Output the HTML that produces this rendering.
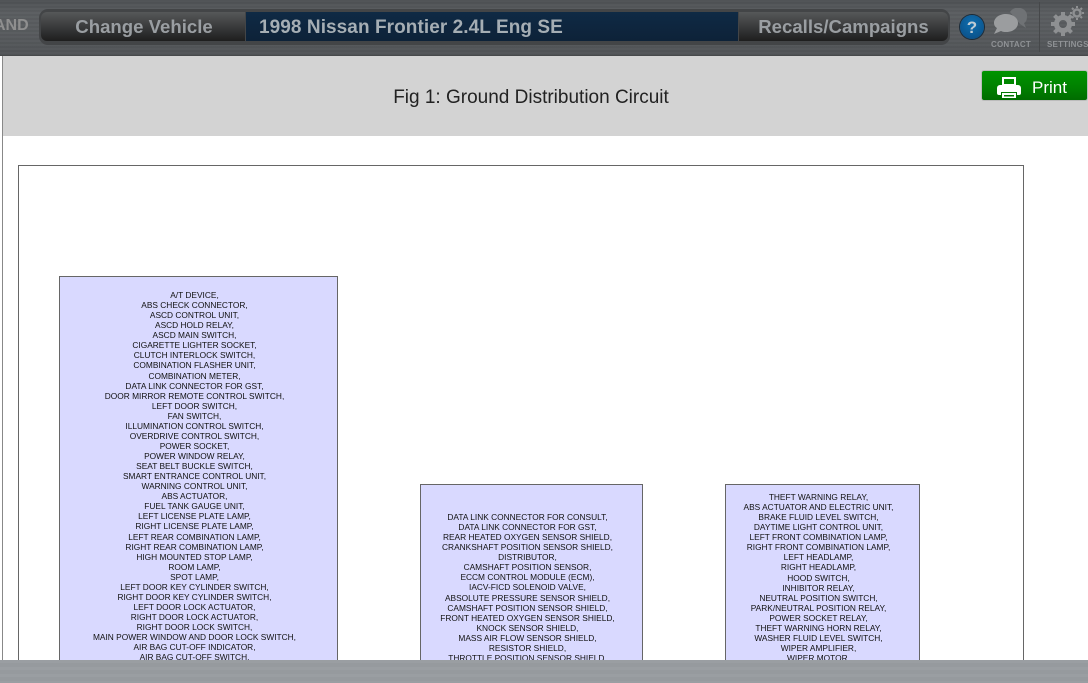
<!DOCTYPE html>
<html><head><meta charset="utf-8"><style>
html,body{margin:0;padding:0;width:1088px;height:683px;overflow:hidden;background:#fff;font-family:"Liberation Sans",sans-serif}
.a{position:absolute}
#top{left:0;top:0;width:1088px;height:55px;background:repeating-linear-gradient(rgba(255,255,255,.018) 0 2px,rgba(0,0,0,.018) 2px 4px),linear-gradient(#4d5053,#5a5d60 22%,#585b5e 60%,#505356);border-bottom:1px solid #47494b}
#pill{left:39px;top:9px;width:911px;height:36px;border-radius:9px;background:#434547}
.seg{top:12px;height:29px;font-weight:bold;font-size:18.6px;line-height:30px;text-align:center;color:#9a9ea2}
.dk{background:linear-gradient(#565859,#3a3b3c 50%,#1e1e1e)}
.box{background:#d9d9ff;border:1px solid #666;box-sizing:border-box;overflow:hidden;text-align:center;font-size:8.35px;line-height:10.06px;color:#111;padding-right:8px}
</style></head><body>
<div class="a" style="left:2px;top:55px;width:1px;height:610px;background:#888"></div>
<div class="a" style="left:3px;top:56px;width:1085px;height:80px;background:#d3d3d3"></div>
<div class="a" style="left:0;top:56px;width:2px;height:80px;background:#fff"></div>
<div class="a" style="left:3px;top:87px;width:1056px;text-align:center;font-size:19px;line-height:22px;color:#222">Fig 1: Ground Distribution Circuit</div>

<div class="a" style="left:982px;top:71px;width:105px;height:29px;background:linear-gradient(#009400,#007f00 60%,#006c00);border-radius:2px;box-shadow:0 0 0 1px #bbb"></div>
<svg class="a" style="left:997px;top:77px" width="24" height="22" viewBox="0 0 24 22"><path fill="#fff" fill-rule="evenodd" d="M5 0h14v8H5zM7 2v5h10V2zM3 8h18a3 3 0 0 1 3 3v5a2 2 0 0 1-2 2h-2v-3H4v3H2a2 2 0 0 1-2-2v-5a3 3 0 0 1 3-3zM5 16h14v5H5zM7 18v1.500h10V18z"/></svg>
<div class="a" style="left:1032px;top:78px;font-size:17px;line-height:20px;color:#fff">Print</div>

<div class="a" style="left:18px;top:165px;width:1006px;height:510px;border:1px solid #666;box-sizing:border-box;background:#fff"></div>

<div class="a box" style="left:59px;top:276px;width:279px;height:390px;padding-top:13px">A/T DEVICE,<br>ABS CHECK CONNECTOR,<br>ASCD CONTROL UNIT,<br>ASCD HOLD RELAY,<br>ASCD MAIN SWITCH,<br>CIGARETTE LIGHTER SOCKET,<br>CLUTCH INTERLOCK SWITCH,<br>COMBINATION FLASHER UNIT,<br>COMBINATION METER,<br>DATA LINK CONNECTOR FOR GST,<br>DOOR MIRROR REMOTE CONTROL SWITCH,<br>LEFT DOOR SWITCH,<br>FAN SWITCH,<br>ILLUMINATION CONTROL SWITCH,<br>OVERDRIVE CONTROL SWITCH,<br>POWER SOCKET,<br>POWER WINDOW RELAY,<br>SEAT BELT BUCKLE SWITCH,<br>SMART ENTRANCE CONTROL UNIT,<br>WARNING CONTROL UNIT,<br>ABS ACTUATOR,<br>FUEL TANK GAUGE UNIT,<br>LEFT LICENSE PLATE LAMP,<br>RIGHT LICENSE PLATE LAMP,<br>LEFT REAR COMBINATION LAMP,<br>RIGHT REAR COMBINATION LAMP,<br>HIGH MOUNTED STOP LAMP,<br>ROOM LAMP,<br>SPOT LAMP,<br>LEFT DOOR KEY CYLINDER SWITCH,<br>RIGHT DOOR KEY CYLINDER SWITCH,<br>LEFT DOOR LOCK ACTUATOR,<br>RIGHT DOOR LOCK ACTUATOR,<br>RIGHT DOOR LOCK SWITCH,<br>MAIN POWER WINDOW AND DOOR LOCK SWITCH,<br>AIR BAG CUT-OFF INDICATOR,<br>AIR BAG CUT-OFF SWITCH,</div>

<div class="a box" style="left:420px;top:484px;width:223px;height:190px;padding-top:27px">DATA LINK CONNECTOR FOR CONSULT,<br>DATA LINK CONNECTOR FOR GST,<br>REAR HEATED OXYGEN SENSOR SHIELD,<br>CRANKSHAFT POSITION SENSOR SHIELD,<br>DISTRIBUTOR,<br>CAMSHAFT POSITION SENSOR,<br>ECCM CONTROL MODULE (ECM),<br>IACV-FICD SOLENOID VALVE,<br>ABSOLUTE PRESSURE SENSOR SHIELD,<br>CAMSHAFT POSITION SENSOR SHIELD,<br>FRONT HEATED OXYGEN SENSOR SHIELD,<br>KNOCK SENSOR SHIELD,<br>MASS AIR FLOW SENSOR SHIELD,<br>RESISTOR SHIELD,<br>THROTTLE POSITION SENSOR SHIELD,</div>

<div class="a box" style="left:725px;top:484px;width:195px;height:190px;padding-top:7px">THEFT WARNING RELAY,<br>ABS ACTUATOR AND ELECTRIC UNIT,<br>BRAKE FLUID LEVEL SWITCH,<br>DAYTIME LIGHT CONTROL UNIT,<br>LEFT FRONT COMBINATION LAMP,<br>RIGHT FRONT COMBINATION LAMP,<br>LEFT HEADLAMP,<br>RIGHT HEADLAMP,<br>HOOD SWITCH,<br>INHIBITOR RELAY,<br>NEUTRAL POSITION SWITCH,<br>PARK/NEUTRAL POSITION RELAY,<br>POWER SOCKET RELAY,<br>THEFT WARNING HORN RELAY,<br>WASHER FLUID LEVEL SWITCH,<br>WIPER AMPLIFIER,<br>WIPER MOTOR,</div>

<div class="a" style="left:0;top:660px;width:1088px;height:23px;background:repeating-linear-gradient(rgba(255,255,255,.02) 0 3px,rgba(0,0,0,.015) 3px 7px),#989ca0"></div>

<div class="a" id="top"></div>
<div class="a" style="left:-6px;top:16px;font-weight:bold;font-size:16px;line-height:19px;color:#8f8f8f">AND</div>
<div class="a" id="pill"></div>
<div class="a seg dk" style="left:41px;width:204px;border-radius:6px 0 0 6px;text-indent:2px">Change Vehicle</div>
<div class="a seg" style="left:246px;width:492px;background:linear-gradient(#0f2a45,#0d2238);text-align:left;text-indent:13px;color:#a5aeb4;font-size:19px;line-height:31px;letter-spacing:.07px">1998 Nissan Frontier 2.4L Eng SE</div>
<div class="a seg dk" style="left:739px;width:209px;border-radius:0 6px 6px 0">Recalls/Campaigns</div>

<div class="a" style="left:960px;top:15px;width:24px;height:24px;border-radius:50%;background:radial-gradient(circle at 50% 35%,#0f6fb0,#0a4a80);box-shadow:0 0 0 1px #1a2a38;color:#c0ccd4;font-weight:bold;font-size:17px;line-height:25px;text-align:center">?</div>

<svg class="a" style="left:992px;top:8px" width="38" height="28" viewBox="0 0 38 28"><path fill="#6f7275" d="M18 4a9 8 0 0 1 17 4c0 4-1 6-3 7l2 5-6-4z"/><path fill="#9b9d9f" d="M14 6c7 0 12 4 12 9s-5 9-12 9c-2 0-3 0-5-1l-7 3 3-6c-2-1-3-3-3-5 0-5 5-9 12-9z"/></svg>
<div class="a" style="left:991px;top:40px;font-size:8px;font-weight:bold;line-height:10px;color:#8f9295;letter-spacing:.2px">CONTACT</div>
<div class="a" style="left:1039px;top:2px;width:1px;height:50px;background:#46484a"></div>

<svg class="a" style="left:1049px;top:6px" width="36" height="30" viewBox="0 0 36 30"><g fill="none" stroke="#8e9092"><circle cx="14" cy="18" r="6.500" stroke-width="5"/><path stroke-width="4" d="M14 6v4M14 26v4M2 18h4M22 18h4M5.500 9.500l3 3M19.500 23.500l3 3M22.500 9.500l-3 3M8.500 23.500l-3 3"/><circle cx="28" cy="7" r="3.500" stroke-width="2.500"/><path stroke-width="2" d="M28 0v2M28 12v2M21 7h2M33 7h2M23 2l1.500 1.500M31.500 10.500l1.500 1.500M33 2l-1.500 1.500M24.500 10.500l-1.500 1.500"/></g></svg>
<div class="a" style="left:1047px;top:40px;font-size:8px;font-weight:bold;line-height:10px;color:#8f9295;letter-spacing:.2px;white-space:nowrap">SETTINGS</div>
</body></html>
